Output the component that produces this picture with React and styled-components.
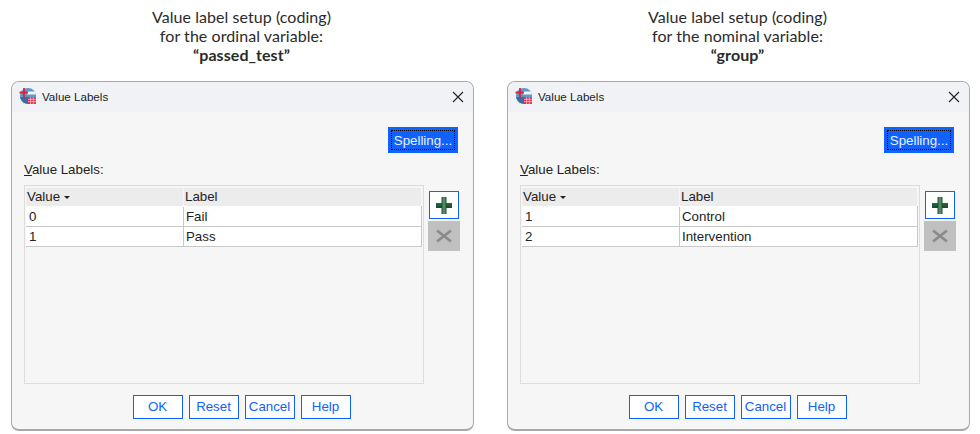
import React from 'react';
import styled, { createGlobalStyle } from 'styled-components';

const Global = createGlobalStyle`
  html, body { margin: 0; padding: 0; background: #fff; }
  body { width: 980px; height: 434px; overflow: hidden; font-family: "Liberation Sans", Arial, sans-serif; }
`;
const Page = styled.div`
  display: grid;
  grid-template-columns: 463px 463px;
  column-gap: 33px;
  padding: 0 10px 0 11px;
  height: 434px;
  box-sizing: border-box;
`;
const Column = styled.section`
  display: flex;
  flex-direction: column;
`;
const Caption = styled.div`
  height: 81px;
  box-sizing: border-box;
  padding: 7px 2px 0 0;
  text-align: center;
  font-family: "Lato", "Open Sans", sans-serif;
  font-size: 16px;
  letter-spacing: 0.06px;
  line-height: 19px;
  color: #2b2b2b;
  strong { font-weight: 700; display: block; }
`;
const Dialog = styled.div`
  width: 463px;
  height: 350px;
  box-sizing: border-box;
  border: 1px solid #a8a8a8;
  border-bottom-width: 2px;
  border-radius: 8px;
  background: #f6f6f6;
  display: flex;
  flex-direction: column;
  overflow: hidden;
`;
const TitleBar = styled.div`
  height: 30px;
  flex: none;
  box-sizing: border-box;
  background: #f1f2f5;
  display: flex;
  align-items: center;
  padding: 0 3px 2px 6px;
  gap: 6px;
  color: #222;
`;
const TitleText = styled.span`
  flex: 1;
  font-size: 11.6px;
`;
const CloseBtn = styled.svg`
  width: 24px;
  height: 24px;
  flex: none;
  margin-top: 2px;
`;
const Body = styled.div`
  flex: 1;
  display: flex;
  flex-direction: column;
  padding: 15px 15px 0 12px;
`;
const SpellRow = styled.div`
  display: flex;
  justify-content: flex-end;
`;
const SpellBtn = styled.div`
  width: 70px;
  height: 26px;
  box-sizing: border-box;
  background: #0f62fe;
  padding: 3px;
  color: #e8efff;
  font-size: 13.3px;
  text-align: center;
`;
const SpellInner = styled.div`
  height: 100%;
  box-sizing: border-box;
  border: 1px dotted #000;
  line-height: 19px;
  white-space: nowrap;
`;
const FieldLabel = styled.div`
  margin-top: 9px;
  height: 23px;
  font-size: 13.3px;
  line-height: 16px;
  color: #222;
  u { text-underline-offset: 1px; }
`;
const TableRow = styled.div`
  display: flex;
  gap: 4px;
  align-items: flex-start;
`;
const TableFrame = styled.div`
  flex: none;
  width: 400px;
  height: 199px;
  box-sizing: border-box;
  border: 1px solid #dcdcdc;
  padding: 2px 0 0 1px;
`;
const HeaderRow = styled.div`
  display: grid;
  grid-template-columns: 157px 1fr;
  height: 18px;
  margin-right: 2px;
  background: #ececec;
  font-size: 13.3px;
  line-height: 18px;
  color: #222;
`;
const HeaderCell = styled.div`
  padding-left: 1px;
  display: flex;
  align-items: center;
  gap: 4px;
  & + & { border-left: 1px solid #f6f6f6; }
`;
const SortMark = styled.span`
  width: 0;
  height: 0;
  border-left: 3px solid transparent;
  border-right: 3px solid transparent;
  border-top: 3px solid #222;
`;
const DataRows = styled.div`
  margin-right: 1px;
  background: #fff;
  padding-top: 1px;
  border-right: 1px solid #c8c8c8;
`;
const DataRow = styled.div`
  display: grid;
  grid-template-columns: 157px 1fr;
  height: 20px;
  box-sizing: border-box;
  border-bottom: 1px solid #c8c8c8;
  font-size: 13.3px;
  line-height: 19px;
  color: #222;
`;
const DataCell = styled.div`
  padding-left: 3px;
  & + & { border-left: 1px solid #c8c8c8; padding-left: 2px; }
`;
const SideButtons = styled.div`
  flex: none;
  display: flex;
  flex-direction: column;
  align-items: center;
  gap: 2px;
  padding-top: 6px;
`;
const IconBtn = styled.div`
  box-sizing: border-box;
  width: ${p => (p.$disabled ? 32 : 30)}px;
  height: ${p => (p.$disabled ? 30 : 28)}px;
  background: ${p => (p.$disabled ? '#c0c0c0' : '#fff')};
  border: ${p => (p.$disabled ? 'none' : '1px solid #0f62fe')};
  display: flex;
  align-items: center;
  justify-content: center;
`;
const Footer = styled.div`
  display: flex;
  justify-content: center;
  gap: 6px;
  margin-top: 11px;
  padding-left: 1px;
`;
const FootBtn = styled.div`
  width: 50px;
  height: 24px;
  box-sizing: border-box;
  border: 1px solid #0f62fe;
  background: #fff;
  color: #0f62fe;
  font-size: 13.3px;
  line-height: 22px;
  text-align: center;
`;

const AppIcon = () => (
  <svg width="18" height="18" viewBox="0 0 18 18">
    <circle cx="10" cy="9" r="8" fill="#5f97c8" />
    <path d="M2.300 11a8 8 0 0 0 12 4.500V10H2.300z" fill="#3c6c9c" />
    <rect x="9" y="4.500" width="8.500" height="3" fill="#f2f5f9" />
    <path d="M6 1v9.500M1.500 5.500h8.500" stroke="#d8263c" strokeWidth="1.800" />
    <rect x="10" y="10" width="8" height="7" fill="#d8365a" />
    <path d="M10 12.300h8M10 14.600h8M12.600 10v7M15.300 10v7" stroke="#f6c6d0" strokeWidth="0.700" />
  </svg>
);
const Plus = ({ id }) => (
  <svg width="16" height="17" viewBox="0 0 16 17">
    <defs>
      <linearGradient id={`${id}v`} x1="0" x2="1" y1="0" y2="0">
        <stop offset="0" stopColor="#1d4f2e" /><stop offset="0.5" stopColor="#5d9a72" /><stop offset="1" stopColor="#1d4f2e" />
      </linearGradient>
      <linearGradient id={`${id}h`} x1="0" x2="0" y1="0" y2="1">
        <stop offset="0" stopColor="#2b6a42" /><stop offset="1" stopColor="#174527" />
      </linearGradient>
    </defs>
    <rect x="0" y="6" width="16" height="5" fill={`url(#${id}h)`} />
    <rect x="5.500" y="0" width="5" height="17" fill={`url(#${id}v)`} />
  </svg>
);
const Cross = () => (
  <svg width="16" height="14" viewBox="0 0 16 14">
    <path d="M1 1.500L15 12.500M15 1.500L1 12.500" stroke="#8a8a8a" strokeWidth="2.800" />
  </svg>
);

const DialogBox = ({ rows, id }) => (
  <Dialog>
    <TitleBar>
      <AppIcon />
      <TitleText>Value Labels</TitleText>
      <CloseBtn viewBox="0 0 24 24">
        <path d="M7 7L17 17M17 7L7 17" stroke="#222" strokeWidth="1.100" fill="none" />
      </CloseBtn>
    </TitleBar>
    <Body>
      <SpellRow>
        <SpellBtn><SpellInner>Spelling...</SpellInner></SpellBtn>
      </SpellRow>
      <FieldLabel><u>V</u>alue Labels:</FieldLabel>
      <TableRow>
        <TableFrame>
          <HeaderRow>
            <HeaderCell>Value <SortMark /></HeaderCell>
            <HeaderCell>Label</HeaderCell>
          </HeaderRow>
          <DataRows>
            {rows.map(([v, l]) => (
              <DataRow key={v}><DataCell>{v}</DataCell><DataCell>{l}</DataCell></DataRow>
            ))}
          </DataRows>
        </TableFrame>
        <SideButtons>
          <IconBtn><Plus id={id} /></IconBtn>
          <IconBtn $disabled><Cross /></IconBtn>
        </SideButtons>
      </TableRow>
      <Footer>
        {['OK', 'Reset', 'Cancel', 'Help'].map(b => <FootBtn key={b}>{b}</FootBtn>)}
      </Footer>
    </Body>
  </Dialog>
);

export default function App() {
  return (
    <>
      <Global />
      <Page>
        <Column>
          <Caption>Value label setup (coding)<br />for the ordinal variable:<strong>“passed_test”</strong></Caption>
          <DialogBox id="a" rows={[['0', 'Fail'], ['1', 'Pass']]} />
        </Column>
        <Column>
          <Caption>Value label setup (coding)<br />for the nominal variable:<strong>“group”</strong></Caption>
          <DialogBox id="b" rows={[['1', 'Control'], ['2', 'Intervention']]} />
        </Column>
      </Page>
    </>
  );
}
